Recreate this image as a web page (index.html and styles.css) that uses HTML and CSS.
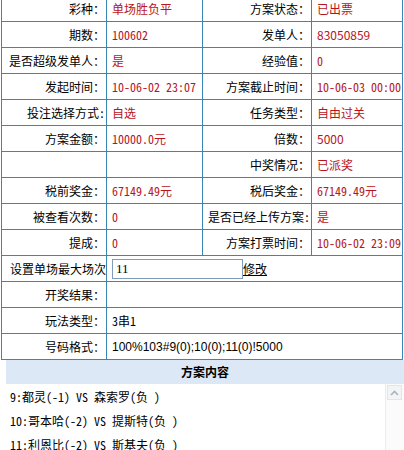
FILE: index.html
```html
<!DOCTYPE html>
<html lang="zh-CN">
<head>
<meta charset="utf-8">
<title>方案详情</title>
<link rel="stylesheet" href="styles.css">
</head>
<body>
<div class="info">
  <div class="cell lbl">彩种：</div><div class="cell val">单场胜负平</div>
  <div class="cell lbl">方案状态：</div><div class="cell val">已出票</div>

  <div class="cell lbl">期数：</div><div class="cell val">100602</div>
  <div class="cell lbl">发单人：</div><div class="cell val prop">83050859</div>

  <div class="cell lbl">是否超级发单人：</div><div class="cell val">是</div>
  <div class="cell lbl">经验值：</div><div class="cell val">0</div>

  <div class="cell lbl">发起时间：</div><div class="cell val">10-06-02 23:07</div>
  <div class="cell lbl">方案截止时间：</div><div class="cell val">10-06-03 00:00</div>

  <div class="cell lbl">投注选择方式:</div><div class="cell val">自选</div>
  <div class="cell lbl">任务类型：</div><div class="cell val">自由过关</div>

  <div class="cell lbl">方案金额：</div><div class="cell val">10000.0元</div>
  <div class="cell lbl">倍数：</div><div class="cell val prop">5000</div>

  <div class="cell lbl"></div><div class="cell val"></div>
  <div class="cell lbl">中奖情况：</div><div class="cell val">已派奖</div>

  <div class="cell lbl">税前奖金：</div><div class="cell val">67149.49元</div>
  <div class="cell lbl">税后奖金：</div><div class="cell val">67149.49元</div>

  <div class="cell lbl">被查看次数：</div><div class="cell val">0</div>
  <div class="cell lbl">是否已经上传方案:</div><div class="cell val">是</div>

  <div class="cell lbl">提成：</div><div class="cell val">0</div>
  <div class="cell lbl">方案打票时间：</div><div class="cell val">10-06-02 23:09</div>

  <div class="cell lbl tight">设置单场最大场次</div>
  <div class="cell val plain span3"><input class="max-input" type="text" value="11"><a class="edit-link" href="#">修改</a></div>

  <div class="cell lbl">开奖结果：</div><div class="cell val plain span3"></div>

  <div class="cell lbl">玩法类型：</div><div class="cell val plain span3">3串1</div>

  <div class="cell lbl">号码格式：</div><div class="cell val plain code span3">100%103#9(0);10(0);11(0)!5000</div>
</div>

<div class="content">
  <div class="content-head">方案内容</div>
  <div class="content-body">
    <div class="lines">
      <div class="line">9:都灵(-1) VS 森索罗(负 )</div>
      <div class="line">10:哥本哈(-2) VS 提斯特(负 )</div>
      <div class="line">11:利恩比(-2) VS 斯基夫(负 )</div>
      <div class="line">12:奥勒松(+1) VS 斯达贝(胜 )</div>
    </div>
    <div class="scrollbar">
      <div class="scroll-btn">
        <svg width="9" height="6" viewBox="0 0 9 6"><path d="M1 5 L4.5 1.5 L8 5" fill="none" stroke="#a8b4c0" stroke-width="1.6"/></svg>
      </div>
    </div>
  </div>
</div>
</body>
</html>
```

FILE: styles.css
```css
html, body {
  margin: 0;
  padding: 0;
  overflow: hidden;
  background: #ffffff;
}

body {
  font-family: "Noto Sans CJK SC", "Liberation Sans", sans-serif;
  font-size: 12px;
  color: #000000;
  font-feature-settings: "hwid" 1;
}

.info {
  display: grid;
  grid-template-columns: 104px 95px 108px 90px;
  grid-auto-rows: 25px;
  gap: 1px;
  padding: 1px;
  background: #3a86b5;
  width: max-content;
  margin: -5px 0 0 1px;
}

.cell {
  background: #ffffff;
  display: flex;
  align-items: center;
  white-space: nowrap;
  overflow: hidden;
}

.lbl {
  justify-content: flex-end;
  padding-right: 1px;
}

.lbl.tight {
  padding-right: 0;
}

.val {
  padding-left: 5px;
  color: #b8141c;
}

.val.prop {
  font-feature-settings: normal;
}

.val.plain {
  color: #000000;
}

.span3 {
  grid-column: span 3;
}

.code {
  font-family: "Liberation Sans", sans-serif;
  font-feature-settings: normal;
  font-size: 12px;
}

.max-input {
  box-sizing: border-box;
  width: 131px;
  height: 20px;
  margin: 0;
  padding: 0 3px;
  border: 1px solid #7f9db9;
  font-family: "Liberation Serif", serif;
  font-size: 13px;
  color: #000;
  background: #fff;
}

.edit-link {
  color: #000000;
  text-decoration: underline;
}

.content {
  margin-left: 6px;
}

.content-head {
  height: 24px;
  line-height: 24px;
  background: #dde8f6;
  text-align: center;
  font-weight: bold;
}

.content-body {
  display: flex;
  height: 66px;
}

.lines {
  flex: 1;
  overflow: hidden;
  padding: 1px 0 0 4px;
  line-height: 24px;
}

.line {
  white-space: pre;
}

.scrollbar {
  width: 17px;
  border-left: 1px solid #ececec;
  background: #fbfbfb;
  padding: 1px 0 0 1px;
}

.scroll-btn {
  box-sizing: border-box;
  width: 15px;
  height: 15px;
  border: 1px solid #e2e6ea;
  background: #f2f4f6;
  display: flex;
  align-items: center;
  justify-content: center;
}
```
